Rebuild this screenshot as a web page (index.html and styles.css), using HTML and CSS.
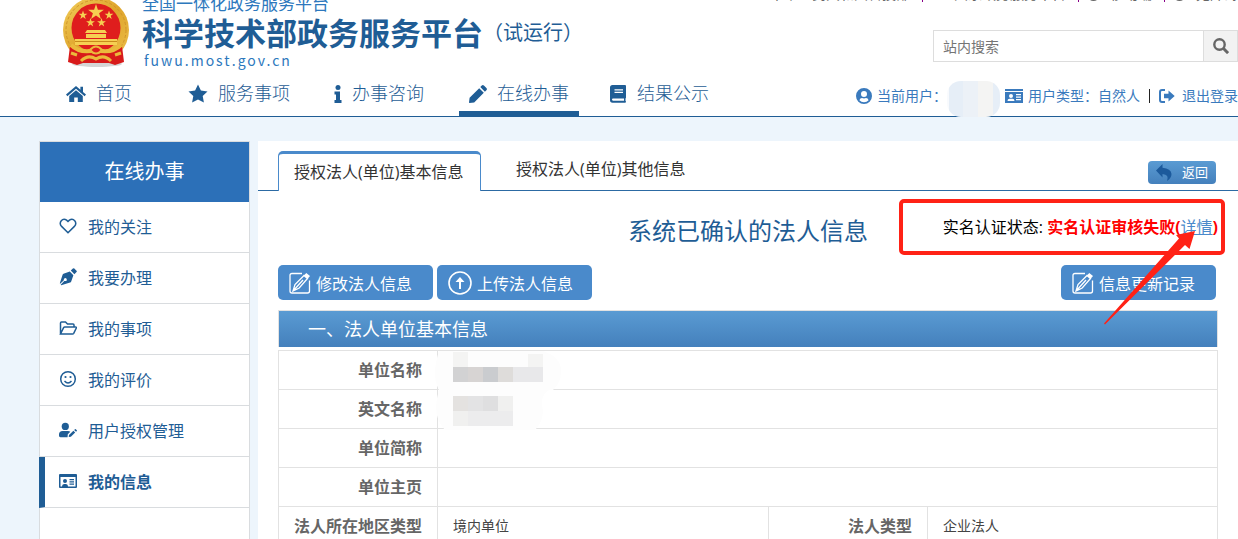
FILE: index.html
```html
<!DOCTYPE html>
<html lang="zh-CN">
<head>
    <meta charset="UTF-8">
    <meta name="viewport" content="width=device-width, initial-scale=1.0">
    <title>科学技术部政务服务平台</title>
    <link rel="stylesheet" href="styles.css">
</head>
<body>
    <!-- 图标 -->
    <svg class="sprite" aria-hidden="true">
        <symbol id="i-home" viewBox="0 0 20 18"><path d="M10 1 0 9.600l1.400 1.600L10 3.800l8.600 7.400L20 9.600l-3-2.600V1.800h-2.600v3z"/><path d="M10 5.300 3.200 11.100V17h5v-4.600h3.600V17h5v-5.900z"/></symbol>
        <symbol id="i-star" viewBox="0 0 20 20"><path d="M10 .5l2.900 6 6.600.9-4.800 4.600 1.200 6.500L10 15.400 4.100 18.500l1.200-6.500L.5 7.400l6.600-.9z"/></symbol>
        <symbol id="i-info" viewBox="0 0 8 18"><circle cx="4" cy="2.500" r="2.500"/><path d="M.5 6.500h5.500v8.500h1.500v3H.5v-3H2V9.500H.5z"/></symbol>
        <symbol id="i-pencil" viewBox="0 0 18 18"><path d="M10.200 3.200l4.600 4.600L5.200 17.400.4 18 0 17.600l.6-4.800zM11.300 2.100l1.500-1.500q1-1 2.100 0l2.500 2.500q1 1 0 2.100l-1.500 1.500z"/></symbol>
        <symbol id="i-book" viewBox="0 0 18 18"><path fill-rule="evenodd" d="M3.500 0H16q1 0 1 1v11.500q0 .6-.5.9v2.500q.5.200.5.800 0 1-1 1H3.500Q1 17.700 1 15V2.500Q1 0 3.500 0zM5.500 4.200v1.200h8.500V4.200zM5.500 6.800V8h8.500V6.800zM4 13.500q-1 0-1 1.100t1 1.100h11v-2.200z"/></symbol>
        <symbol id="i-user" viewBox="0 0 16 16"><path fill-rule="evenodd" d="M8 0a8 8 0 100 16A8 8 0 108 0zM8 3a3 3 0 110 6 3 3 0 010-6zM3.400 12.300Q4 10 6 10q2 .8 4 0 2 0 2.600 2.300Q10.800 14.200 8 14.200T3.400 12.300z"/></symbol>
        <symbol id="i-card" viewBox="0 0 18 14"><path fill-rule="evenodd" d="M1 0h16q1 0 1 1v12q0 1-1 1H1q-1 0-1-1V1q0-1 1-1zM1.500 3v9.500H3q0-2.500 2-2.500h2q2 0 2 2.500h7.500V3zM10.500 5H15v1.200h-4.500zM10.500 7.300H15v1.200h-4.500zM10.500 9.600H15v1.200h-4.500z"/><circle cx="6" cy="7" r="2"/></symbol>
        <symbol id="i-card-solid" viewBox="0 0 18 14"><path fill-rule="evenodd" d="M0 0h18v2H0zM0 3h18v11H0zM6 5a2 2 0 100 4 2 2 0 000-4zM2.500 12h7q0-2.300-2-2.300h-3q-2 0-2 2.300zM11 5v1.200h5V5zM11 7.500v1.200h5V7.500zM11 10v1.200h5V10z"/></symbol>
        <symbol id="i-exit" viewBox="0 0 16 14"><path d="M6 1H3Q1 1 1 3v8q0 2 2 2h3" fill="none" stroke="currentColor" stroke-width="2"/><path d="M9.500 1.500L15.700 7l-6.200 5.500V9.300H5V4.700h4.500z"/></symbol>
        <symbol id="i-search" viewBox="0 0 16 16"><circle cx="6.500" cy="6.500" r="5.200" fill="none" stroke="currentColor" stroke-width="2.400"/><path d="M10.500 10.500l4.600 4.600" stroke="currentColor" stroke-width="3"/></symbol>
        <symbol id="i-heart" viewBox="0 0 18 16"><path d="M9 14.800L2.600 8.400C-.8 4.800 3.500-.8 7.600 2.200L9 3.500l1.400-1.300c4.100-3 8.400 2.600 5 6.200z" fill="none" stroke="currentColor" stroke-width="1.500"/></symbol>
        <symbol id="i-pen" viewBox="0 0 18 18"><path d="M11.800 2.600L13.900.5q.7-.6 1.400 0l2.200 2.200q.6.700 0 1.400l-2.100 2.100z"/><path fill-rule="evenodd" d="M10.800 3.600l3.600 3.600-2.200 6.300q-.3.800-1.100 1L2.200 17.200l-.5-.5 3.600-3.800q1.900.7 2.600-1-.1-1.900-1.900-1.800-1.600.7-1.200 2.100L1.200 15.800.8 15.300 3.500 6.900q.2-.8 1-1.100z"/></symbol>
        <symbol id="i-folder" viewBox="0 0 18 16"><path d="M1.500 14V3q0-1 1-1h4l2 2h5.500q1 0 1 1v2M1.500 14h12q.8 0 1.200-.7L17.300 8q.3-1-.8-1H5.800q-.8 0-1.200.7z" fill="none" stroke="currentColor" stroke-width="1.500"/></symbol>
        <symbol id="i-smile" viewBox="0 0 18 18"><circle cx="9" cy="9" r="7.300" fill="none" stroke="currentColor" stroke-width="1.500"/><circle cx="6.500" cy="7" r="1.100"/><circle cx="11.500" cy="7" r="1.100"/><path d="M5.500 11q3.500 4 7 0" fill="none" stroke="currentColor" stroke-width="1.400"/></symbol>
        <symbol id="i-useredit" viewBox="0 0 20 16"><circle cx="7" cy="4" r="4"/><path d="M0 14.500V13q0-4 4-4h6q1.500 0 2.600 1L9.800 12.800 9.500 16H1.500Q0 16 0 14.500zM16 8.700l2 2L13.200 15.500l-2.400.4.3-2.400zM16.800 8l1-.9q.5-.4.900 0l1.100 1.100q.4.400 0 .9l-.9.9z"/></symbol>
        <symbol id="i-edit" viewBox="0 0 22 22"><g fill="none" stroke="currentColor" stroke-width="1.300"><path d="M13 1.500H3Q1 1.500 1 3.500V19q0 2 2 2h15.500q2 0 2-2V8.500"/><path d="M15 3.500L6 12.500 4 19l6.200-3 8.300-9.500zM4 19l10-11"/></g><path d="M14.800 3.500L17.300 1l3.700 3-2.500 3z"/></symbol>
        <symbol id="i-upload" viewBox="0 0 24 24"><circle cx="12" cy="12" r="11" fill="none" stroke="currentColor" stroke-width="1.600"/><path d="M11 18v-7H7.500L12 6l4.500 5H13v7z"/></symbol>
        <symbol id="i-back" viewBox="0 0 16 17"><path d="M6.500 0v3.800Q15 4.500 15.500 10q0 4-4.500 7 2.500-6.500-4.500-7v3.500L0 6.500z"/></symbol>
    </svg>

    <div class="page">
        <header class="header">
            <div class="header-left">
                <div class="brand">
                    <svg class="emblem" viewBox="0 0 68 72" role="img" aria-label="国徽">
                        <defs>
                            <linearGradient id="gold" x1="0" y1="0" x2="1" y2="1">
                                <stop offset="0" stop-color="#f2cf5c"/>
                                <stop offset=".5" stop-color="#dfa52c"/>
                                <stop offset="1" stop-color="#edc04a"/>
                            </linearGradient>
                        </defs>
                        <ellipse cx="35" cy="68" rx="25" ry="3" fill="#d5d5d5"/>
                        <circle cx="34" cy="34" r="33" fill="url(#gold)"/>
                        <circle cx="34" cy="34" r="30" fill="none" stroke="#d0952a" stroke-width="1" stroke-dasharray="3 2"/>
                        <circle cx="34" cy="32" r="24.500" fill="#df1d1d"/>
                        <g fill="#f6cf52">
                            <path d="M34 8l1.900 5.700h6l-4.800 3.500 1.800 5.700-4.900-3.500-4.900 3.500 1.800-5.700-4.800-3.500h6z"/>
                            <path id="star" d="M21 14.500l1.100 3.200h3.300l-2.700 2 1 3.200-2.700-2-2.700 2 1-3.200-2.700-2h3.300z"/>
                            <use href="#star" x="26"/>
                            <use href="#star" x="7.500" y="7.500"/>
                            <use href="#star" x="18.500" y="7.500"/>
                            <path d="M25 34h18l2 3h-22zM24 38h20v4H24zM13 43h42v6H13z"/>
                        </g>
                        <path d="M13 45.500h42" stroke="#c98a1c"/>
                        <path d="M8 50l16 5h20l16-5 2 16-9 3-6-2H21l-6 2-9-3z" fill="#d81a1a"/>
                        <path d="M9 49q9 9 25 5 16 4 25-5" fill="none" stroke="#ebb93c" stroke-width="4"/>
                        <path d="M28 54q6-7 12 0-6 7-12 0z" fill="#df1d1d" stroke="#ebb93c" stroke-width="2"/>
                        <path d="M19 65q7-7 15-2 8-5 15 2M9 57l6 2M53 59l6-2" fill="none" stroke="#ebb93c" stroke-width="3"/>
                    </svg>
                    <div class="brand-text">
                        <div class="brand-sub">全国一体化政务服务平台</div>
                        <div class="brand-title"><strong>科学技术部政务服务平台</strong><span>（试运行）</span></div>
                        <div class="brand-url">fuwu.most.gov.cn</div>
                    </div>
                </div>
                <nav class="nav">
                    <a href="#"><svg class="w20"><use href="#i-home"/></svg>首页</a>
                    <a href="#"><svg class="w20"><use href="#i-star"/></svg>服务事项</a>
                    <a href="#"><svg class="w8"><use href="#i-info"/></svg>办事咨询</a>
                    <a href="#" class="active"><svg class="w18"><use href="#i-pencil"/></svg>在线办事</a>
                    <a href="#"><svg class="w18"><use href="#i-book"/></svg>结果公示</a>
                </nav>
            </div>
            <div class="header-right">
                <div class="toplinks">
                    <a href="#">中华人民共和国科技部</a>
                    <a href="#"><svg><use href="#i-card"/></svg>国家政务服务平台</a>
                    <a href="#"><svg><use href="#i-user"/></svg>移动端</a>
                    <a href="#"><svg><use href="#i-user"/></svg>无障碍</a>
                </div>
                <form class="search">
                    <input type="text" placeholder="站内搜索" aria-label="站内搜索">
                    <button type="button" aria-label="搜索"><svg><use href="#i-search"/></svg></button>
                </form>
                <div class="userbar">
                    <svg class="w16"><use href="#i-user"/></svg>
                    <span>当前用户：</span>
                    <span class="user-mask"><i></i></span>
                    <svg class="w18"><use href="#i-card-solid"/></svg>
                    <span>用户类型：自然人</span>
                    <a href="#"><svg class="w16"><use href="#i-exit"/></svg>退出登录</a>
                </div>
            </div>
        </header>

        <div class="layout">
            <aside class="sidebar">
                <h2>在线办事</h2>
                <a href="#"><svg><use href="#i-heart"/></svg>我的关注</a>
                <a href="#"><svg><use href="#i-pen"/></svg>我要办理</a>
                <a href="#"><svg><use href="#i-folder"/></svg>我的事项</a>
                <a href="#"><svg><use href="#i-smile"/></svg>我的评价</a>
                <a href="#"><svg><use href="#i-useredit"/></svg>用户授权管理</a>
                <a href="#" class="active"><svg><use href="#i-card"/></svg>我的信息</a>
            </aside>

            <main class="main">
                <div class="tabs">
                    <a href="#" class="tab active">授权法人(单位)基本信息</a>
                    <a href="#" class="tab">授权法人(单位)其他信息</a>
                    <button type="button" class="back"><svg><use href="#i-back"/></svg>返回</button>
                </div>

                <div class="title-row">
                    <h1>系统已确认的法人信息</h1>
                    <p class="status">实名认证状态: <strong>实名认证审核失败(<a href="#">详情</a>)</strong></p>
                    <div class="mark"></div>
                    <svg class="arrow" viewBox="0 0 92 94"><path d="M0 92.500L75 7.500 72 4l19-4-5.500 18-4.500-4L1 93.500z"/></svg>
                </div>

                <div class="actions">
                    <button type="button"><svg class="w22"><use href="#i-edit"/></svg>修改法人信息</button>
                    <button type="button"><svg class="w24"><use href="#i-upload"/></svg>上传法人信息</button>
                    <button type="button" class="right"><svg class="w22"><use href="#i-edit"/></svg>信息更新记录</button>
                </div>

                <section class="info">
                    <h3>一、法人单位基本信息</h3>
                    <table>
                        <colgroup>
                            <col class="col-label"><col class="col-value"><col class="col-label"><col>
                        </colgroup>
                        <tr>
                            <th>单位名称</th>
                            <td colspan="3">
                                <svg class="mask" viewBox="0 0 128 40">
                                    <path d="M4 0h104q18 6 18 20 0 12-8 19H4q-8-14 0-39z" fill="#fdfdfd"/>
                                    <path d="M18 1h15v15H18zM93 3h15v13H93z" fill="#f4f4f3"/>
                                    <path d="M18 16h15v15H18z" fill="#d2d2d3"/>
                                    <path d="M33 16h15v15H33z" fill="#d7d4d3"/>
                                    <path d="M48 16h15v15H48z" fill="#cacccf"/>
                                    <path d="M63 16h15v15H63z" fill="#dedcda"/>
                                    <path d="M78 16h30v15H78z" fill="#e8e8ea"/>
                                </svg>
                            </td>
                        </tr>
                        <tr>
                            <th>英文名称</th>
                            <td colspan="3">
                                <svg class="mask" viewBox="0 0 128 40">
                                    <path d="M4 0h110q-10 6-6 20 0 12-8 20H10q-14-14-6-40z" fill="#fdfdfd"/>
                                    <path d="M18 6h15v15H18z" fill="#e4e2e0"/>
                                    <path d="M33 6h15v15H33z" fill="#e3e3e4"/>
                                    <path d="M48 6h15v15H48z" fill="#dfdfe0"/>
                                    <path d="M63 6h15v15H63zM18 21h15v15H18z" fill="#f0f0ef"/>
                                    <path d="M33 21h45v15H33z" fill="#ececed"/>
                                </svg>
                            </td>
                        </tr>
                        <tr>
                            <th>单位简称</th>
                            <td colspan="3"></td>
                        </tr>
                        <tr>
                            <th>单位主页</th>
                            <td colspan="3"></td>
                        </tr>
                        <tr>
                            <th>法人所在地区类型</th>
                            <td>境内单位</td>
                            <th>法人类型</th>
                            <td>企业法人</td>
                        </tr>
                    </table>
                </section>
            </main>
        </div>
    </div>
</body>
</html>
```

FILE: styles.css
```css
* {
    box-sizing: border-box;
}
body {
    margin: 0;
    height: 100vh;
    overflow: hidden;
    background: #edf5fc;
    font-family: "Open Sans", "Noto Sans CJK SC", sans-serif;
    font-size: 16px;
    color: #333;
}
h1, h2, h3, p {
    margin: 0;
    font-weight: 400;
}
a {
    color: inherit;
    text-decoration: none;
}
button, input {
    font: inherit;
}
svg {
    fill: currentColor;
    flex: none;
}
.sprite {
    display: none;
}
.w8 { width: 8px; height: 18px; }
.w16 { width: 16px; height: 16px; }
.w18 { width: 18px; height: 18px; }
.w20 { width: 20px; height: 20px; }
.w22 { width: 22px; height: 22px; }
.w24 { width: 24px; height: 24px; }

/* 页面已向下滚动 */
.page {
    margin-top: -20px;
}

/* 头部 */
.header {
    display: flex;
    justify-content: space-between;
    background: #fff;
    border-bottom: 1px solid #1f5d95;
    color: #1f5d95;
}
.brand {
    display: flex;
    align-items: flex-end;
    gap: 12px;
    padding: 14px 0 0 62px;
}
.emblem {
    width: 68px;
    height: 72px;
}
.brand-sub {
    font-size: 17px;
    line-height: 20px;
    color: #2d78bd;
}
.brand-title {
    display: flex;
    font-size: 31px;
    line-height: 38px;
    white-space: nowrap;
}
.brand-title strong {
    font-weight: 700;
}
.brand-title span {
    font-size: 20px;
}
.brand-url {
    padding-left: 2px;
    font-family: "Noto Sans CJK SC", sans-serif;
    font-size: 14px;
    line-height: 16px;
    letter-spacing: 2px;
    color: #2d78bd;
}
.nav {
    display: flex;
    margin: 8px 0 0 29px;
}
.nav a {
    display: flex;
    justify-content: center;
    align-items: center;
    gap: 10px;
    width: 120px;
    margin: 0 10px;
    font-size: 18px;
    font-weight: 300;
    line-height: 35px;
    border-bottom: 5px solid transparent;
}
.nav a.active {
    border-color: #1f5d95;
}
.header-right {
    display: flex;
    flex-direction: column;
    align-items: flex-end;
    padding-top: 6px;
}
.toplinks {
    display: flex;
    font-size: 14px;
    line-height: 16px;
    color: #666;
}
.toplinks a {
    display: flex;
    align-items: center;
    gap: 10px;
    padding-left: 8px;
}
.toplinks a + a {
    margin-left: 12px;
    border-left: 1px solid #808;
}
.toplinks svg {
    width: 13px;
    height: 13px;
}
.search {
    display: flex;
    width: 305px;
    height: 32px;
    margin-top: 28px;
    border: 1px solid #ddd;
}
.search input {
    flex: 1;
    min-width: 0;
    padding: 0 9px;
    border: 0;
    font-size: 14px;
}
.search input::placeholder {
    color: #757575;
}
.search button {
    width: 34px;
    padding: 0;
    border: 0;
    border-left: 1px solid #ddd;
    background: #f2f2f2;
    color: #666;
}
.search svg {
    display: block;
    width: 16px;
    height: 16px;
    margin: 0 auto;
}
.userbar {
    display: flex;
    align-items: center;
    gap: 5px;
    height: 20px;
    margin-top: 24px;
    font-size: 14px;
    line-height: 20px;
    color: #3a7abd;
    white-space: nowrap;
}
.userbar a {
    display: flex;
    align-items: center;
    gap: 7px;
    margin-left: 4px;
    padding-left: 10px;
    background: linear-gradient(#222, #222) left center / 1px 14px no-repeat;
}
.user-mask {
    position: relative;
    width: 53px;
    height: 20px;
    margin-left: -5px;
}
.user-mask i {
    position: absolute;
    top: -5px;
    left: 0;
    width: 53px;
    height: 36px;
    border-radius: 14px;
    background: linear-gradient(90deg, #f8fafd 2px, #e6eef7 2px, #e6eef7 16px, #ecf1f7 16px, #ecf1f7 31px, #f4f4f3 31px, #f4f4f3 46px, #e6eef7 46px);
}

/* 主体 */
.layout {
    display: flex;
    gap: 8px;
    min-height: calc(100vh - 97px);
    padding: 24px 0 0 39px;
}
.sidebar {
    flex: none;
    width: 211px;
    background: #fff;
    border: 1px solid #d9dcdf;
    color: #1f5d95;
}
.sidebar h2 {
    height: 60px;
    background: #2c70b8;
    color: #fff;
    font-size: 20px;
    line-height: 60px;
    text-align: center;
}
.sidebar a {
    display: flex;
    align-items: center;
    gap: 11px;
    height: 51px;
    padding: 0 0 2px 19px;
    border-bottom: 1px solid #d9dcdf;
}
.sidebar a.active {
    margin-left: -1px;
    padding-left: 14px;
    border-left: 6px solid #1f5d95;
    font-weight: 700;
}
.sidebar svg {
    width: 18px;
    height: 18px;
}
.main {
    flex: 1;
    min-width: 0;
    background: #fff;
}
.tabs {
    display: flex;
    align-items: flex-end;
    height: 50px;
    padding: 0 22px 0 20px;
    border-bottom: 1px solid #2c6aa3;
}
.tab {
    min-width: 203px;
    padding: 0 15px;
    margin-left: 20px;
    line-height: 42px;
}
.tab.active {
    margin: 0 0 -1px;
    background: #fff;
    border: 1px solid #4a8acb;
    border-top-width: 3px;
    border-bottom: 0;
    border-radius: 5px 5px 0 0;
    line-height: 37px;
}
.back {
    display: flex;
    align-items: center;
    gap: 10px;
    width: 68px;
    height: 23px;
    margin: 0 0 6px auto;
    padding: 0 8px;
    border: 0;
    border-radius: 4px;
    background: linear-gradient(#5a9bd3, #4480bc);
    color: #fff;
    font-size: 13px;
    line-height: 23px;
    white-space: nowrap;
}
.back svg {
    width: 16px;
    height: 17px;
    color: #1c5a9c;
}
.title-row {
    position: relative;
    display: grid;
    grid-template-columns: 1fr auto 1fr;
    padding: 20px 20px 0;
}
.title-row h1 {
    grid-column: 2;
    padding-top: 2px;
    color: #1f5d95;
    font-size: 24px;
    line-height: 36px;
}
.status {
    text-align: right;
    line-height: 32px;
    color: #000;
    white-space: nowrap;
}
.status strong {
    color: #f00;
    font-weight: 700;
}
.status a {
    color: #4a8acb;
    font-weight: 400;
    text-decoration: underline;
}
.mark {
    position: absolute;
    top: 8px;
    right: 13px;
    width: 326px;
    height: 56px;
    border: 4px solid #ff2216;
    border-radius: 5px;
}
.arrow {
    position: absolute;
    z-index: 1;
    top: 40px;
    right: 42px;
    width: 92px;
    height: 94px;
    fill: #ff2216;
}
.actions {
    display: flex;
    gap: 4px;
    padding: 16px 22px 10px 20px;
}
.actions button {
    display: flex;
    align-items: center;
    gap: 5px;
    width: 155px;
    height: 35px;
    padding: 0 10px 0 11px;
    border: 0;
    border-radius: 5px;
    background: #4a8acb;
    color: #fff;
    white-space: nowrap;
}
.actions .right {
    margin-left: auto;
}
.info {
    margin: 0 20px;
}
.info h3 {
    height: 37px;
    margin-bottom: 3px;
    padding-left: 29px;
    border: 1px solid #e2e2e2;
    border-bottom: 0;
    background: linear-gradient(#5a9bd3, #4480bc);
    color: #fff;
    font-size: 18px;
    line-height: 36px;
}
.info table {
    width: 100%;
    table-layout: fixed;
    border-collapse: collapse;
}
.col-label {
    width: 159px;
}
.col-value {
    width: 331px;
}
.info th, .info td {
    position: relative;
    height: 39px;
    padding: 0 15px 3px;
    border: 1px solid #e2e2e2;
    color: #666;
    white-space: nowrap;
}
.info th {
    text-align: right;
    font-weight: 700;
}
.info td {
    color: #444;
    font-size: 14px;
}
.mask {
    position: absolute;
    top: 0;
    left: -3px;
    width: 128px;
    height: 40px;
}
```
